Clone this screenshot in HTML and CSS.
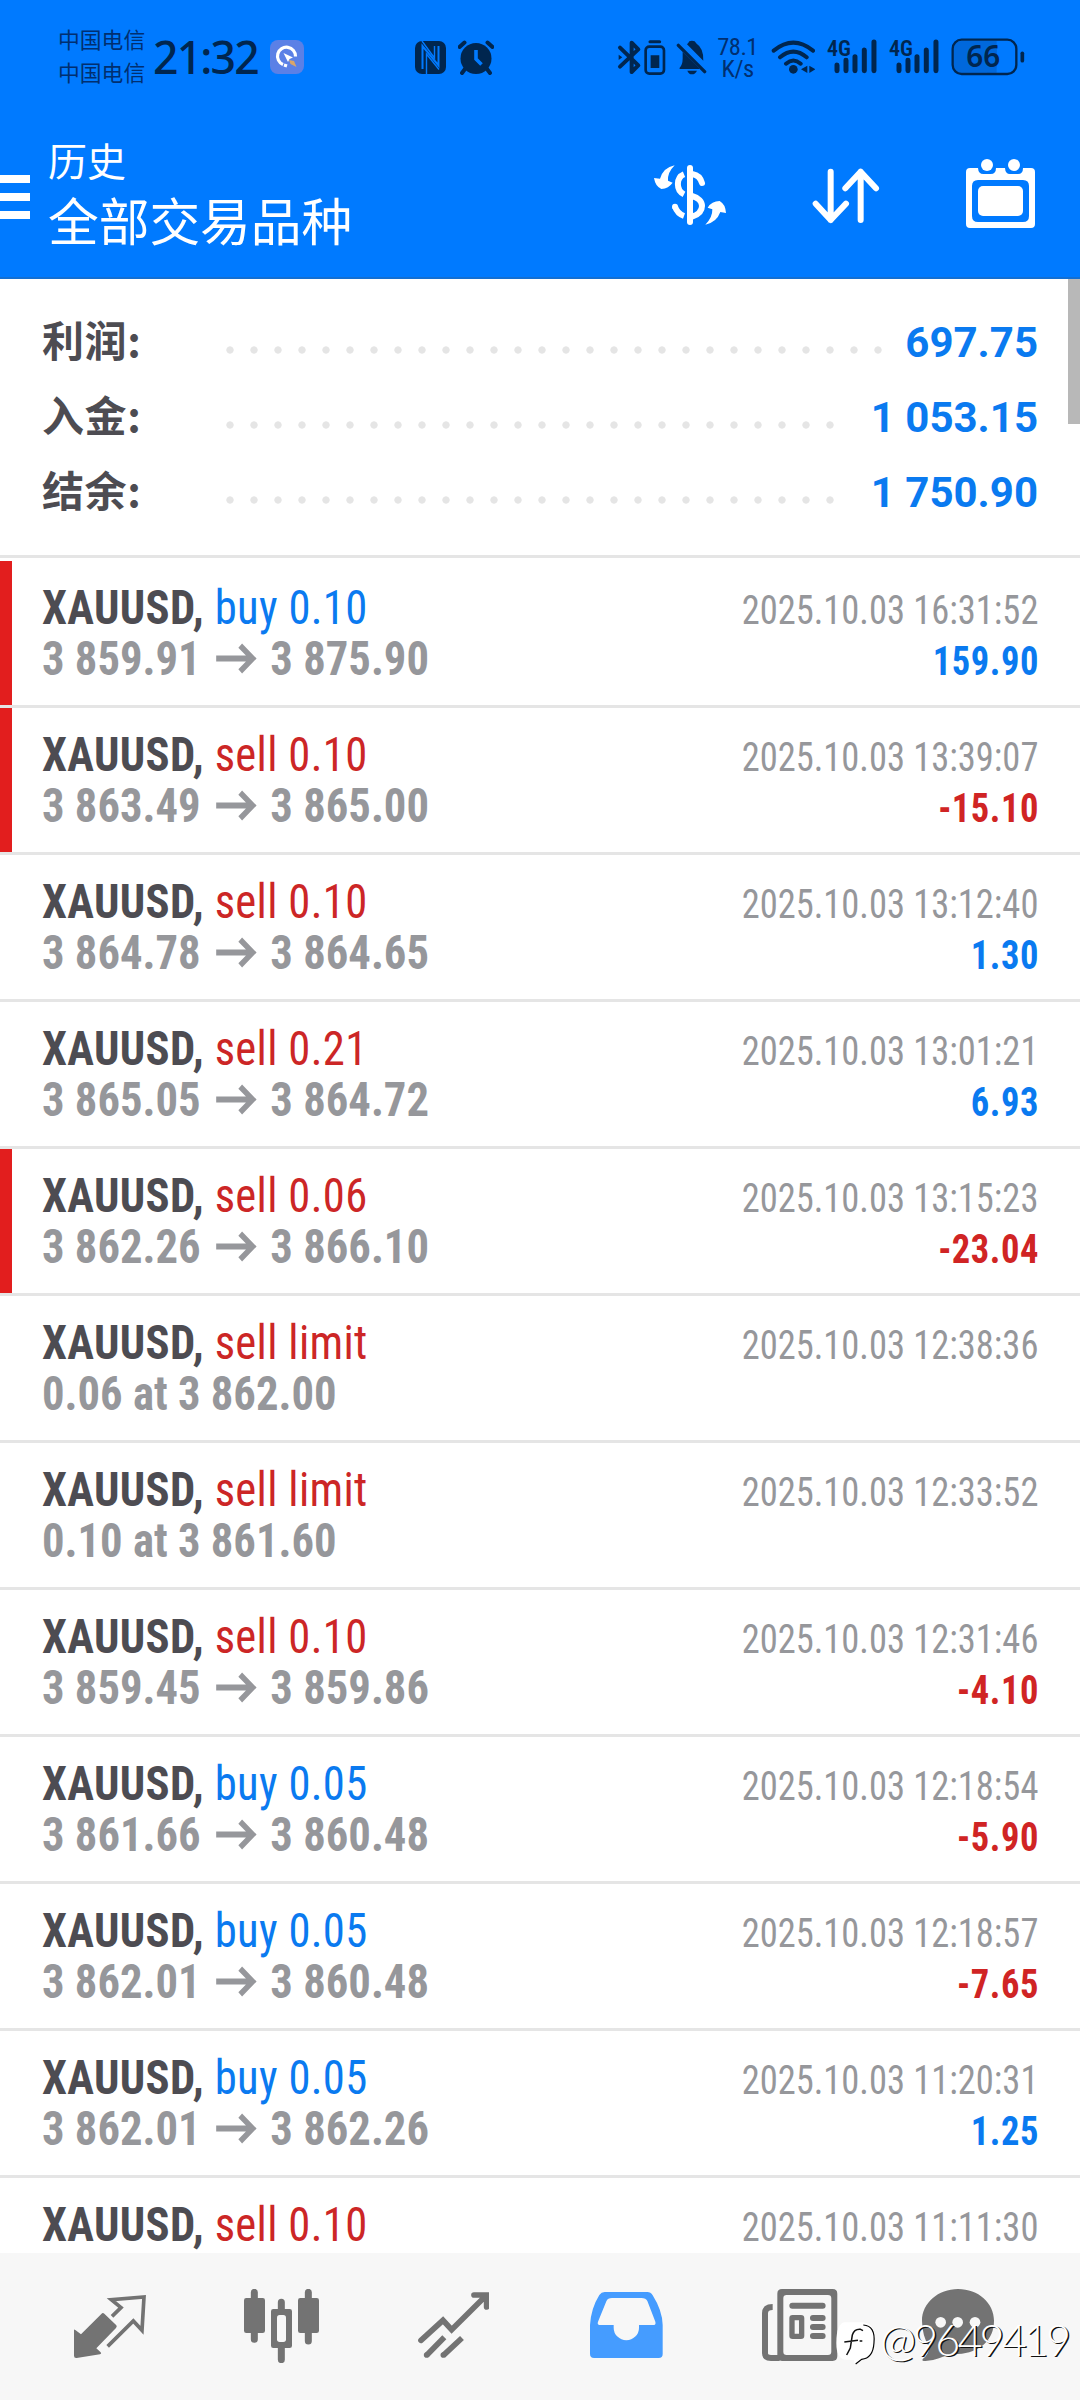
FILE: index.html
```html
<!DOCTYPE html>
<html lang="zh-CN">
<head>
<meta charset="utf-8">
<title>历史</title>
<link rel="stylesheet" href="styles.css">
</head>
<body>
<svg class="defs" width="0" height="0">
  <symbol id="arrow" viewBox="0 0 42 30"><path d="M0 15H38M25 2.5L38 15L25 27.5" fill="none" stroke="currentColor" stroke-width="5.6"/></symbol>
  <symbol id="signal" viewBox="648 27 160 106" overflow="visible">
    <path d="M681 105V122M708 91V122M735 80V122M763 60V122M792 36V122" stroke="currentColor" stroke-width="15" stroke-linecap="round" fill="none"/>
    <text x="651" y="79" font-size="66" textLength="72" lengthAdjust="spacingAndGlyphs" fill="currentColor">4G</text>
  </symbol>
</svg>
<div class="screen">
  <header class="header">
    <div class="status">
      <div class="carriers"><span>中国电信</span><span>中国电信</span></div>
      <div class="clock">21:32</div>
      <svg class="badge" viewBox="0 0 34 34"><rect width="34" height="34" rx="8" fill="#5b80e6"/><path d="M13 25A9 9 0 1 1 25.500 17" transform="translate(0 -.5)" fill="none" stroke="#fff" stroke-width="3.200"/><path d="M14 25L17 26" stroke="#fff" stroke-width="3"/><path d="M13.500 13L23 17.500L19.500 19L18 22Z" fill="#fff"/><path d="M19 20L24 21L26.500 27L20.500 24Z" fill="#d9a56a"/></svg>
      <svg class="nfc" viewBox="0 0 31 33"><rect width="31" height="33" rx="7" fill="currentColor"/><path d="M7.500 28V5L23.500 24.500V5" fill="none" stroke="#007aff" stroke-width="2"/><path d="M11.500 33V13L24 28.500M7 0L19.500 17V5" fill="none" stroke="#007aff" stroke-width="1.400"/></svg>
      <svg class="alarm" viewBox="0 0 36 35"><circle cx="18" cy="18.500" r="15.500" fill="currentColor"/><path d="M1.500 7L6.500 2.500M34.500 7L29.500 2.500M7 29L4 33M29 29L32 33" stroke="currentColor" stroke-width="4" stroke-linecap="round"/><path d="M18 10V19L23.500 24.500" fill="none" stroke="#007aff" stroke-width="3.600"/></svg>
      <svg class="bt" viewBox="20 27 148 110"><g fill="none" stroke="currentColor"><path d="M29 53L84 106L64 126V38L84 58L29 110" stroke-width="12" stroke-linejoin="round" stroke-linecap="round"/><path d="M119 35H148" stroke-width="9" stroke-linecap="round"/><rect x="106" y="50" width="55" height="81" rx="11" stroke-width="8"/></g><path d="M25 74L36 82L25 90ZM121 76H147V114H121Z" fill="currentColor"/></svg>
      <svg class="bell" viewBox="200 27 94 110"><path d="M210 115Q220 104 220 86V66L268 113Q272 115 270 117H212ZM233 43Q237 40 240 34Q248 30 256 34L262 41Q283 54 282 92ZM234 122H263Q258 133 248 133Q238 133 234 122Z" fill="currentColor"/><path d="M207 46L286 125" stroke="currentColor" stroke-width="10" stroke-linecap="round"/></svg>
      <div class="rate"><span>78.1</span><span>K/s</span></div>
      <svg class="wifi" viewBox="482 27 134 106"><circle cx="549" cy="118" r="13" fill="currentColor"/><path d="M490 62Q549 14 608 62M509 82Q549 48 589 82M527 101Q549 82 571 101" fill="none" stroke="currentColor" stroke-width="12" stroke-linecap="round"/><path d="M572 118L591 107V129ZM615 118L597 107V129Z" fill="currentColor"/></svg>
      <svg class="sig1"><use href="#signal"/></svg>
      <svg class="sig2"><use href="#signal"/></svg>
      <svg class="battery" viewBox="1022 23 222 114"><rect x="1031" y="32" width="128" height="95" rx="22" fill="#0068dc"/><path d="M1130 32H1159V127H1130Z" fill="#0068dc"/><rect x="1027" y="28" width="191" height="103" rx="27" fill="none" stroke="currentColor" stroke-width="7"/><path d="M1236 69V91" stroke="currentColor" stroke-width="11" stroke-linecap="round"/><text x="1068" y="110" font-size="91" textLength="102" lengthAdjust="spacingAndGlyphs" fill="currentColor">66</text></svg>
    </div>
    <div class="bar">
      <div class="menu"><i></i><i></i><i></i></div>
      <div class="titles"><div class="title">历史</div><div class="subtitle">全部交易品种</div></div>
      <svg class="swap" viewBox="42 45 216 180"><g fill="none" stroke="#fff" stroke-width="18"><path d="M150 54V216" stroke-linecap="round"/><path d="M159 73Q179 76 186 99" stroke-linecap="round"/><path d="M132 73C108 83 107 121 132 133M156 138C196 148 196 187 156 200"/><path d="M132 198Q112 191 105 170"/></g><circle cx="105" cy="170" r="9" fill="#fff"/><path d="M104 46Q82 68 84 92L98 98Q86 115 64 117Q46 109 42 84L60 86Q70 53 104 46ZM196 224Q218 202 217 178L203 173Q215 153 239 153Q256 162 258 189L241 186Q230 217 196 224Z" fill="#fff"/></svg>
      <svg class="sort" viewBox="517 51 204 168"><path d="M573 62V207M528 158L573 207L619 158M663 207V62M617 112L663 62L709 112" fill="none" stroke="#fff" stroke-width="18" stroke-linecap="round" stroke-linejoin="round"/></svg>
      <svg class="calendar" viewBox="978 27 207 207"><path fill-rule="evenodd" d="M990 54H1014Q1015 72 1030 72H1052Q1068 72 1068 54H1095Q1096 72 1110 72H1134Q1149 72 1149 54H1173Q1185 54 1185 66V222Q1185 234 1173 234H990Q978 234 978 222V66Q978 54 990 54ZM1014 90Q996 90 996 108V198Q996 216 1014 216H1149Q1167 216 1167 198V108Q1167 90 1149 90Z" fill="#fff"/><circle cx="1041" cy="45" r="18" fill="#fff"/><circle cx="1122" cy="45" r="18" fill="#fff"/><rect x="1014" y="108" width="135" height="90" rx="15" fill="#fff"/></svg>
    </div>
  </header>

  <main class="content">
    <section class="summary">
      <div class="sum"><span class="label">利润:</span><span class="dots"></span><span class="total">697.75</span></div>
      <div class="sum long"><span class="label">入金:</span><span class="dots"></span><span class="total">1 053.15</span></div>
      <div class="sum long"><span class="label">结余:</span><span class="dots"></span><span class="total">1 750.90</span></div>
    </section>
    <section class="deals">
      <article class="deal marked"><div class="left"><div class="name"><b>XAUUSD,</b> <span class="buy">buy 0.10</span></div><div class="price"><span>3 859.91</span><svg class="to"><use href="#arrow"/></svg><span>3 875.90</span></div></div><div class="right"><time>2025.10.03 16:31:52</time><div class="profit plus">159.90</div></div></article>
      <article class="deal marked"><div class="left"><div class="name"><b>XAUUSD,</b> <span class="sell">sell 0.10</span></div><div class="price"><span>3 863.49</span><svg class="to"><use href="#arrow"/></svg><span>3 865.00</span></div></div><div class="right"><time>2025.10.03 13:39:07</time><div class="profit minus">-15.10</div></div></article>
      <article class="deal"><div class="left"><div class="name"><b>XAUUSD,</b> <span class="sell">sell 0.10</span></div><div class="price"><span>3 864.78</span><svg class="to"><use href="#arrow"/></svg><span>3 864.65</span></div></div><div class="right"><time>2025.10.03 13:12:40</time><div class="profit plus">1.30</div></div></article>
      <article class="deal"><div class="left"><div class="name"><b>XAUUSD,</b> <span class="sell">sell 0.21</span></div><div class="price"><span>3 865.05</span><svg class="to"><use href="#arrow"/></svg><span>3 864.72</span></div></div><div class="right"><time>2025.10.03 13:01:21</time><div class="profit plus">6.93</div></div></article>
      <article class="deal marked"><div class="left"><div class="name"><b>XAUUSD,</b> <span class="sell">sell 0.06</span></div><div class="price"><span>3 862.26</span><svg class="to"><use href="#arrow"/></svg><span>3 866.10</span></div></div><div class="right"><time>2025.10.03 13:15:23</time><div class="profit minus">-23.04</div></div></article>
      <article class="deal"><div class="left"><div class="name"><b>XAUUSD,</b> <span class="sell">sell limit</span></div><div class="price"><span>0.06 at 3 862.00</span></div></div><div class="right"><time>2025.10.03 12:38:36</time></div></article>
      <article class="deal"><div class="left"><div class="name"><b>XAUUSD,</b> <span class="sell">sell limit</span></div><div class="price"><span>0.10 at 3 861.60</span></div></div><div class="right"><time>2025.10.03 12:33:52</time></div></article>
      <article class="deal"><div class="left"><div class="name"><b>XAUUSD,</b> <span class="sell">sell 0.10</span></div><div class="price"><span>3 859.45</span><svg class="to"><use href="#arrow"/></svg><span>3 859.86</span></div></div><div class="right"><time>2025.10.03 12:31:46</time><div class="profit minus">-4.10</div></div></article>
      <article class="deal"><div class="left"><div class="name"><b>XAUUSD,</b> <span class="buy">buy 0.05</span></div><div class="price"><span>3 861.66</span><svg class="to"><use href="#arrow"/></svg><span>3 860.48</span></div></div><div class="right"><time>2025.10.03 12:18:54</time><div class="profit minus">-5.90</div></div></article>
      <article class="deal"><div class="left"><div class="name"><b>XAUUSD,</b> <span class="buy">buy 0.05</span></div><div class="price"><span>3 862.01</span><svg class="to"><use href="#arrow"/></svg><span>3 860.48</span></div></div><div class="right"><time>2025.10.03 12:18:57</time><div class="profit minus">-7.65</div></div></article>
      <article class="deal"><div class="left"><div class="name"><b>XAUUSD,</b> <span class="buy">buy 0.05</span></div><div class="price"><span>3 862.01</span><svg class="to"><use href="#arrow"/></svg><span>3 862.26</span></div></div><div class="right"><time>2025.10.03 11:20:31</time><div class="profit plus">1.25</div></div></article>
      <article class="deal"><div class="left"><div class="name"><b>XAUUSD,</b> <span class="sell">sell 0.10</span></div></div><div class="right"><time>2025.10.03 11:11:30</time></div></article>
    </section>
    <div class="scrollbar"></div>
  </main>

  <nav class="tabs">
    <svg class="t1" viewBox="42 27 219 222"><path d="M42 151Q42 147 46 150L63 163L124 102Q128 97 133 101L169 136Q172 140 168 144L109 205L122 217Q126 221 120 223L50 234Q42 235 42 227Z" fill="#737373"/><path d="M156 109L183 83L154 59L252 51L246 151L220 123L143 199" fill="none" stroke="#737373" stroke-width="11"/></svg>
    <svg class="t2" viewBox="552 27 225 222"><path d="M583 37V178M745 37V183M664 67V239" stroke="#737373" stroke-width="21" stroke-linecap="round"/><rect x="552" y="54" width="63" height="105" rx="7" fill="#737373"/><rect x="714" y="54" width="63" height="105" rx="7" fill="#737373"/><rect x="633" y="87" width="63" height="117" rx="7" fill="#737373"/><rect x="651" y="105" width="27" height="81" rx="8" fill="#f7f7f7"/></svg>
    <svg class="t3" viewBox="1073 27 214 222"><g fill="none" stroke="#737373" stroke-width="17"><path d="M1082 181L1148 121L1174 149L1276 48M1241 45H1279V81" stroke-linecap="round"/><path d="M1099 226L1152 172M1149 226L1205 174"/></g><circle cx="1099" cy="225" r="8.500" fill="#737373"/><circle cx="1149" cy="225" r="8.500" fill="#737373"/></svg>
    <svg class="t4" viewBox="30 27 218 222"><path d="M74 36H202Q212 36 218 46Q247 92 248 135V222Q248 234 236 234H42Q30 234 30 222V135Q33 85 58 45Q64 36 74 36Z" fill="#459cff"/><path d="M96 54H184Q198 54 202 63L226 125Q229 135 219 135H177V143A38 38 0 0 1 101 143V135H62Q50 135 54 125L79 64Q83 54 96 54Z" fill="#f7f7f7"/></svg>
    <svg class="t5" viewBox="547 27 226 222"><path fill-rule="evenodd" d="M607 27H759Q773 27 773 41V229Q773 243 759 243H607Q593 243 593 229V41Q593 27 607 27ZM621 45Q611 45 611 55V215Q611 225 621 225H745Q755 225 755 215V55Q755 45 745 45Z" fill="#737373"/><path d="M579 81Q556 81 556 100V220Q556 234 574 234H600" fill="none" stroke="#737373" stroke-width="18"/><path d="M638 77.500H729M700 114H729M700 141H729M700 168H729" stroke="#737373" stroke-width="18" stroke-linecap="round"/><rect x="637" y="113" width="29" height="56" rx="2" fill="none" stroke="#737373" stroke-width="16"/></svg>
    <svg class="t6" viewBox="1027 27 216 222"><path d="M1135 27C1196 27 1243 69 1243 122C1243 180 1200 218 1135 222Q1100 224 1078 235Q1055 244 1033 243Q1025 242 1030 236Q1046 224 1049 203Q1027 165 1027 122C1027 69 1076 27 1135 27Z" fill="#737373"/><g fill="#f7f7f7"><circle cx="1083" cy="127" r="16"/><circle cx="1134" cy="127" r="16"/><circle cx="1186" cy="127" r="16"/></g></svg>
    <div class="watermark"><svg class="logo" viewBox="766 124 124 134"><path d="M795 128H848Q888 130 885 180Q882 238 848 240L826 255L822 241L800 240Q770 240 770 190Q770 132 795 128Z" fill="#fff"/><path d="M851 136Q888 138 883 190Q880 236 846 239L828 253" fill="none" stroke="#000" stroke-width="3.500"/><path d="M801 226L812 205L818 166Q824 147 843 149L850 153M794 187L835 182M840 184H848" fill="none" stroke="#111" stroke-width="4.500"/></svg><span>@9649419</span></div>
  </nav>
</div>
</body>
</html>
```
FILE: styles.css
```css
* { box-sizing: border-box; }
body { margin: 0; background: #fff; }
svg { display: block; flex: none; }
.defs { position: absolute; }
.screen {
  width: 1080px; height: 2400px; overflow: hidden;
  display: flex; flex-direction: column;
  font-family: Roboto, "Noto Sans CJK SC", sans-serif;
}

/* header */
.header { height: 279px; background: #007aff; border-bottom: 2px solid #136fd2; flex: none; }
.status { height: 114px; padding-left: 58px; display: flex; align-items: center; color: #00264f; }
.carriers { display: flex; flex-direction: column; width: 95px; margin-top: -4px; font-size: 21.8px; line-height: 33px; color: #002f70; white-space: nowrap; font-family: "Noto Sans CJK SC", sans-serif; }
.clock { font: 500 44.5px/50px "Noto Sans", sans-serif; letter-spacing: -1.8px; width: 117px; }
.badge { width: 34px; height: 34px; }
.nfc { width: 31px; height: 33px; margin-left: 111px; }
.alarm { width: 36px; height: 35px; margin-left: 12px; }
.bt { width: 49.3px; height: 36.7px; margin-left: 123px; }
.bell { width: 31.3px; height: 36.7px; margin-left: 10px; }
.rate { width: 40px; margin: 1px 0 0 10px; display: flex; flex-direction: column; align-items: center; font-size: 24.5px; line-height: 22px; font-stretch: 80%; letter-spacing: -.5px; color: #002f70; }
.wifi { width: 44.7px; height: 35.3px; margin-left: 13px; }
.sig1, .sig2 { width: 53.3px; height: 35.3px; margin-left: 11px; overflow: visible; font-family: Roboto; font-weight: 600; font-stretch: 75%; }
.sig2 { margin-left: 8.700px; }
.battery { width: 74px; height: 38px; margin-left: 9px; overflow: visible; font-family: "Noto Sans"; font-weight: 600; }

.bar { height: 163px; display: flex; align-items: flex-start; color: #fff; }
.menu { width: 30px; padding-top: 61px; display: flex; flex-direction: column; gap: 10px; }
.menu i { height: 8px; background: #fff; }
.titles { width: 605px; padding-left: 18px; font-family: "Noto Sans CJK SC", sans-serif; }
.title { font-size: 39px; line-height: 50px; margin-top: 20px; }
.subtitle { font-size: 50.7px; line-height: 60px; margin-top: 5px; }
.swap { width: 72px; height: 60px; margin: 51px 0 0 19px; }
.sort { width: 68px; height: 56px; margin: 54px 0 0 86px; }
.calendar { width: 69px; height: 69px; margin: 45px 0 0 86px; }

/* summary */
.content { flex: 1; min-height: 0; overflow: hidden; position: relative; }
.summary { height: 279px; padding: 26px 42px 0; border-bottom: 3px solid #e5e5e5; }
.sum { display: flex; align-items: center; height: 75px; }
.label { width: 184px; margin-top: -7px; font: 700 42px/60px "Noto Sans CJK SC", sans-serif; letter-spacing: .6px; color: #4d4c52; }
.dots { flex: 1; height: 8px; margin-top: 14px; background: radial-gradient(circle at 4px 4px, #e5e5e5 3.300px, transparent 4px) 0 0 / 24px 8px repeat-x; }
.total { width: 156px; text-align: right; white-space: nowrap; font-size: 42px; font-weight: 700; color: #0a7af0; }
.long .total { width: 204px; }
.scrollbar { position: absolute; top: 0; right: 0; width: 12px; height: 145px; background: #b8b8b8; }

/* deals */
.deals { padding-top: 3px; }
.deal { height: 147px; border-bottom: 3px solid #e5e5e5; padding: 21px 42px 0 42px; display: flex; justify-content: space-between; white-space: nowrap; font-stretch: 75%; }
.marked { box-shadow: inset 12px 0 #e21e1e; }
.left { font-size: 48px; line-height: 51px; transform: scaleX(.93); transform-origin: left; }
.name { letter-spacing: .35px; }
.name b { color: #4d4c52; }
.buy { color: #0a7af0; }
.sell { color: #cc2626; }
.price { display: flex; align-items: center; font-weight: 700; color: #96979b; }
.to { width: 46px; height: 31px; margin: 0 14px 0 15px; }
.right { font-size: 40px; line-height: 51px; padding-top: 3px; text-align: right; transform: scaleX(.912); transform-origin: right; }
time { color: #96979b; display: block; }
.profit { font-weight: 700; letter-spacing: .6px; margin-right: -.6px; }
.plus { color: #0a7af0; }
.minus { color: #d02424; }

/* tabs */
.tabs { flex: none; height: 147px; background: #f7f7f7; padding: 36px 0 0 74px; display: flex; align-items: flex-start; position: relative; }
.tabs > svg { height: 74px; }
.t1 { width: 73px; }
.t2 { width: 75px; margin-left: 97px; }
.t3 { width: 71.3px; margin-left: 98.700px; }
.t4 { width: 72.7px; margin-left: 101px; }
.t5 { width: 75.3px; margin-left: 99.700px; }
.t6 { width: 72px; margin-left: 84.700px; }
.watermark { position: absolute; left: 835px; top: 61px; display: flex; align-items: flex-start; }
.logo { width: 41.3px; height: 44.7px; margin-top: 7px; }
.watermark span { margin-left: 4px; font: 300 43px/52px Lato, sans-serif; letter-spacing: -2.800px; color: #fff; text-shadow: 1.500px 1px 0 #111; }
```
